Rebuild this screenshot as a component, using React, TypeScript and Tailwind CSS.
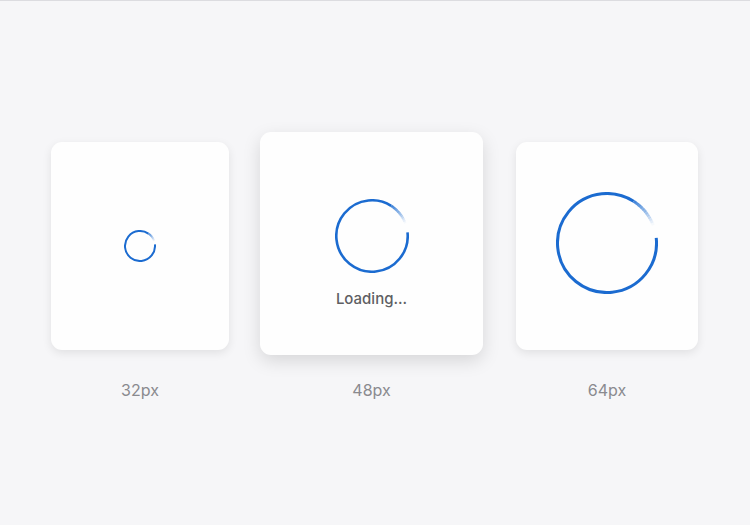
import React from "react";

const BLUE = "#1b6bd0";

function Spinner({ size, stroke }: { size: number; stroke: number }) {
  const r = (size - stroke) / 2;
  const c = 2 * Math.PI * r;
  const mid = size / 2;
  // solid arc runs from -6deg clockwise to 302deg, then fades out until 338deg
  const solid = 308;
  const steps = 12;
  const fadeSpan = 36;
  const seg = fadeSpan / steps;
  return (
    <svg width={size} height={size} viewBox={`0 0 ${size} ${size}`}>
      <g transform={`rotate(-6 ${mid} ${mid})`}>
        <circle
          cx={mid}
          cy={mid}
          r={r}
          fill="none"
          stroke={BLUE}
          strokeWidth={stroke}
          strokeDasharray={`${(c * solid) / 360} ${c}`}
        />
        {Array.from({ length: steps }).map((_, i) => (
          <circle
            key={i}
            cx={mid}
            cy={mid}
            r={r}
            fill="none"
            stroke={BLUE}
            strokeWidth={stroke}
            opacity={0.85 * (1 - (i + 0.5) / steps)}
            strokeDasharray={`${(c * (seg + 0.3)) / 360} ${c}`}
            strokeDashoffset={-(c * (solid + i * seg)) / 360}
          />
        ))}
      </g>
    </svg>
  );
}

export default function App() {
  return (
    <div
      className="w-[750px] h-[525px] bg-[#f6f6f8] border-t border-[#dcdce0] flex justify-center pt-[131px]"
      style={{ fontFamily: "Inter, 'Liberation Sans', sans-serif" }}
    >
      <div className="flex gap-[31px] -ml-[1px]">
        <div className="flex flex-col items-center">
          <div className="h-[223px] flex items-center pt-[4px]">
            <div className="w-[178px] h-[208px] bg-[#fefefe] rounded-[11px] shadow-[0_3px_10px_rgba(0,0,0,0.09)] flex items-center justify-center">
              <Spinner size={32} stroke={2} />
            </div>
          </div>
          <p className="mt-[25px] text-[16px] leading-5 text-[#8a8a8f]">32px</p>
        </div>

        <div className="flex flex-col items-center">
          <div className="w-[223px] h-[223px] bg-[#fefefe] rounded-[11px] shadow-[0_6px_18px_rgba(0,0,0,0.13)] flex flex-col items-center pt-[67px]">
            <Spinner size={74} stroke={2.6} />
            <p className="mt-[16px] text-[15px] leading-5 font-medium text-[#5f5f63]">Loading...</p>
          </div>
          <p className="mt-[25px] text-[16px] leading-5 text-[#8a8a8f]">48px</p>
        </div>

        <div className="flex flex-col items-center ml-[2px]">
          <div className="h-[223px] flex items-center pt-[4px]">
            <div className="w-[182px] h-[208px] bg-[#fefefe] rounded-[11px] shadow-[0_3px_10px_rgba(0,0,0,0.09)] flex items-center justify-center pb-[6px]">
              <Spinner size={102} stroke={3} />
            </div>
          </div>
          <p className="mt-[25px] text-[16px] leading-5 text-[#8a8a8f]">64px</p>
        </div>
      </div>
    </div>
  );
}
